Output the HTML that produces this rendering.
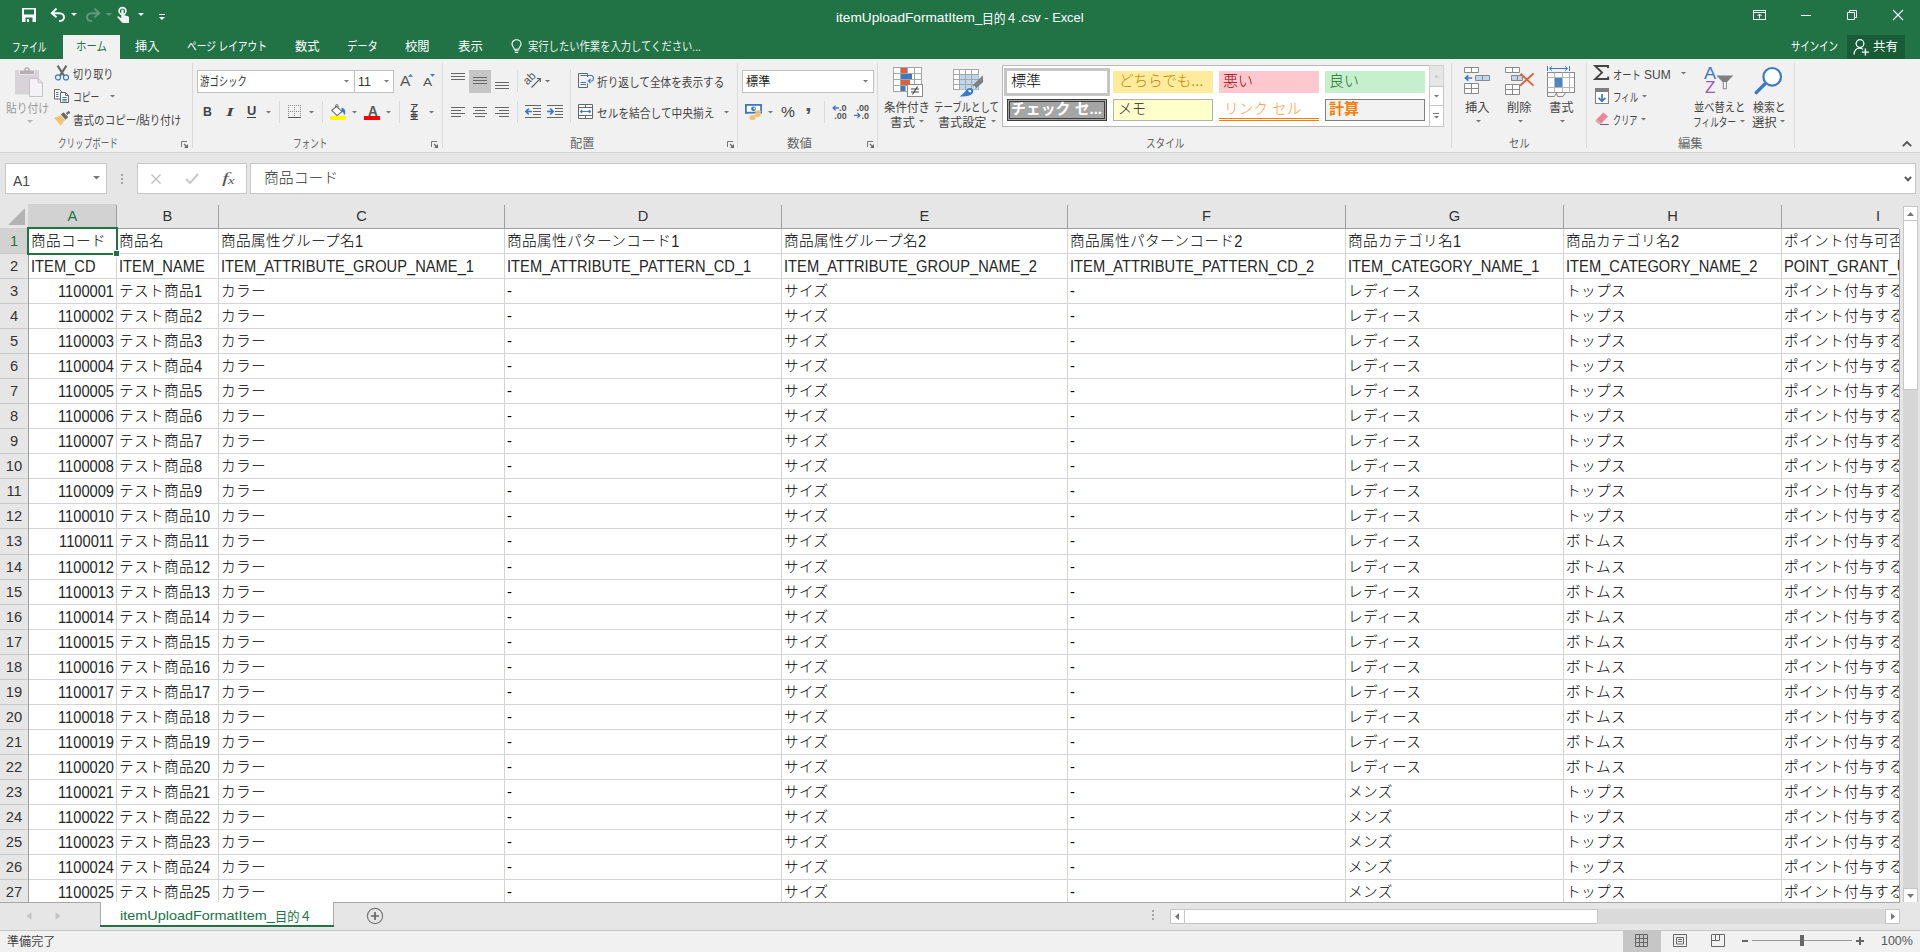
<!DOCTYPE html>
<html lang="ja"><head><meta charset="utf-8"><title>itemUploadFormatItem_目的４.csv - Excel</title>
<style>
html,body{margin:0;padding:0;}
body{width:1920px;height:952px;overflow:hidden;background:#e6e6e6;font-family:"Liberation Sans","Noto Sans CJK JP",sans-serif;color:#444;}
#app{position:relative;width:1920px;height:952px;overflow:hidden;}
.abs{position:absolute;}
.t{position:absolute;white-space:nowrap;line-height:1;transform-origin:0 50%;}
svg{position:absolute;overflow:visible;}
.c{position:absolute;height:24px;line-height:24px;font-size:14.67px;color:#000;font-weight:300;letter-spacing:0.33px;white-space:nowrap;overflow:hidden;box-sizing:border-box;padding-left:2px;}
.c.n{text-align:right;padding-right:2px;padding-left:0;}
.ch .L,.rh .L{color:inherit;transform:scaleY(1.05);}
.ch{top:204px;height:24px;line-height:24px;font-size:14.67px;text-align:center;}
.rh{left:0;width:28px;height:24px;line-height:24px;font-size:14.67px;text-align:center;}
.L{letter-spacing:0;color:#262626;display:inline-block;transform:translateY(0.8px) scaleY(1.09);transform-origin:0 17.1px;}
.c.l .L{letter-spacing:0.03px;}

</style></head><body>
<div id="app">
<!-- titlebar -->
<div class="abs" style="left:0px;top:0px;width:1920px;height:59px;background:#217346;"></div>
<svg style="left:22px;top:8px" width="14" height="14" viewBox="0 0 14 14"><path d="M0 0H14V14H0Z M2 1.5V6.5H12V1.5Z M3.5 9.5V14H10.5V9.5Z" fill="#fff" fill-rule="evenodd"/><rect x="5" y="11" width="2" height="3" fill="#fff"/></svg>
<svg style="left:50px;top:7px" width="16" height="16" viewBox="0 0 16 16"><path d="M6.5 1.5L1.8 6.2L6.5 10.2 M2 6.2H9.5C12.5 6.2 14 8.2 14 10.2C14 12.6 12 14 9 14" fill="none" stroke="#fff" stroke-width="1.9" stroke-linecap="butt"/></svg>
<svg style="left:70.5px;top:13px" width="6" height="3" viewBox="0 0 6 3"><path d="M0 0H6L3 3Z" fill="#fff"/></svg>
<svg style="left:85px;top:7px" width="16" height="16" viewBox="0 0 16 16"><path d="M9.5 1.5L14.2 6.2L9.5 10.2 M14 6.2H6.5C3.5 6.2 2 8.2 2 10.2C2 12.6 4 14 7 14" fill="none" stroke="#5d9c7a" stroke-width="1.9"/></svg>
<svg style="left:105.5px;top:13px" width="6" height="3" viewBox="0 0 6 3"><path d="M0 0H6L3 3Z" fill="#5d9c7a"/></svg>
<svg style="left:116px;top:6px" width="15" height="18" viewBox="0 0 15 18"><circle cx="6.5" cy="5" r="3.4" fill="none" stroke="#fff" stroke-width="1.6"/><path d="M5.3 4.2C5.3 3.3 7.7 3.3 7.7 4.2V9L11.5 10C12.6 10.3 13 11 13 12V17H6.5L1.5 11.5C1 10.7 2 10 2.8 10.5L5.3 12.3Z" fill="#f0f0f0"/></svg>
<svg style="left:137.5px;top:13px" width="6" height="3" viewBox="0 0 6 3"><path d="M0 0H6L3 3Z" fill="#fff"/></svg>
<div class="abs" style="left:159px;top:14px;width:6px;height:1px;background:#fff;"></div>
<svg style="left:159px;top:17px" width="6" height="3" viewBox="0 0 6 3"><path d="M0 0H6L3 3Z" fill="#fff"/></svg>
<span class="t" style="left:835.5px;top:7.95833px;height:20px;line-height:20px;font-size:13.4px;color:#fff;transform:scaleX(1.0192);">itemUploadFormatItem_</span>
<span class="t" style="left:981.5px;top:8.94167px;height:20px;line-height:20px;font-size:13px;color:#fff;transform:scaleX(0.9073);">目的４</span>
<span class="t" style="left:1018.1px;top:7.95833px;height:20px;line-height:20px;font-size:13.4px;color:#fff;transform:scaleX(0.9569);">.csv - Excel</span>
<svg style="left:1753px;top:10px" width="13" height="10" viewBox="0 0 13 10"><rect x="0.5" y="0.5" width="12" height="9" fill="none" stroke="#fff"/><path d="M0 2.5H13 M6.5 4V8.5 M4.5 6L6.5 4L8.5 6" fill="none" stroke="#fff"/></svg>
<div class="abs" style="left:1801px;top:15px;width:10px;height:1px;background:#fff;"></div>
<svg style="left:1847px;top:10px" width="10" height="10" viewBox="0 0 10 10"><path d="M0.5 2.5H7.5V9.5H0.5Z M2.5 2.5V0.5H9.5V7.5H7.5" fill="none" stroke="#fff"/></svg>
<svg style="left:1893px;top:10px" width="10" height="10" viewBox="0 0 10 10"><path d="M0 0L10 10M10 0L0 10" stroke="#fff" stroke-width="1.1"/></svg>
<div class="abs" style="left:63px;top:35px;width:57px;height:24px;background:#f1f1f1;"></div>
<span class="t" style="left:11.5px;top:39.3208px;height:19px;line-height:19px;font-size:12.5px;color:#fff;transform:scaleX(0.6878);">ファイル</span>
<span class="t" style="left:75.5px;top:38.3208px;height:19px;line-height:19px;font-size:12.5px;color:#217346;transform:scaleX(0.8320);">ホーム</span>
<span class="t" style="left:134.5px;top:38.3208px;height:19px;line-height:19px;font-size:12.5px;color:#fff;transform:scaleX(0.9754);">挿入</span>
<span class="t" style="left:186.5px;top:38.3208px;height:19px;line-height:19px;font-size:12.5px;color:#fff;transform:scaleX(0.7740);">ページ レイアウト</span>
<span class="t" style="left:294.5px;top:38.3208px;height:19px;line-height:19px;font-size:12.5px;color:#fff;transform:scaleX(0.9754);">数式</span>
<span class="t" style="left:346.5px;top:38.3208px;height:19px;line-height:19px;font-size:12.5px;color:#fff;transform:scaleX(0.8237);">データ</span>
<span class="t" style="left:404.5px;top:38.3208px;height:19px;line-height:19px;font-size:12.5px;color:#fff;transform:scaleX(0.9754);">校閲</span>
<span class="t" style="left:457.5px;top:38.3208px;height:19px;line-height:19px;font-size:12.5px;color:#fff;transform:scaleX(0.9954);">表示</span>
<svg style="left:511px;top:39px" width="11" height="15" viewBox="0 0 11 15"><path d="M3.3 10.2C3.3 8.6 1 7.6 1 5C1 2.6 3 0.8 5.5 0.8C8 0.8 10 2.6 10 5C10 7.6 7.7 8.6 7.7 10.2Z" fill="none" stroke="#fff" stroke-width="1.1"/><path d="M3.5 11.8H7.5 M3.8 13.5H7.2" stroke="#fff" stroke-width="1.1"/></svg>
<span class="t" style="left:527.5px;top:38.3208px;height:19px;line-height:19px;font-size:12.5px;color:#e9f2ec;transform:scaleX(0.8246);">実行したい作業を入力してください...</span>
<span class="t" style="left:1790.5px;top:38.3208px;height:19px;line-height:19px;font-size:12.5px;color:#fff;transform:scaleX(0.7502);">サインイン</span>
<div class="abs" style="left:1847px;top:35px;width:58px;height:24px;background:#185c37;"></div>
<svg style="left:1853px;top:39px" width="17" height="17" viewBox="0 0 17 17"><circle cx="7" cy="4.6" r="3.9" fill="none" stroke="#fff" stroke-width="1.2"/><path d="M1 15.5C1 11.5 3.5 9.2 6.5 9.2C7.8 9.2 9 9.6 10 10.4" fill="none" stroke="#fff" stroke-width="1.2"/><path d="M12.4 9.6V16.6M8.9 13.1H15.9" stroke="#fff" stroke-width="1.35"/></svg>
<span class="t" style="left:1872.5px;top:38.3208px;height:19px;line-height:19px;font-size:12.5px;color:#fff;transform:scaleX(0.9954);">共有</span>
<!-- ribbon -->
<div class="abs" style="left:0px;top:59px;width:1920px;height:93px;background:#f1f1f1;"></div>
<div class="abs" style="left:0px;top:152px;width:1920px;height:1px;background:#d4d4d4;"></div>
<div class="abs" style="left:192px;top:63px;width:1px;height:85px;background:#dadada;"></div>
<div class="abs" style="left:442px;top:63px;width:1px;height:85px;background:#dadada;"></div>
<div class="abs" style="left:737px;top:63px;width:1px;height:85px;background:#dadada;"></div>
<div class="abs" style="left:877px;top:63px;width:1px;height:85px;background:#dadada;"></div>
<div class="abs" style="left:1451px;top:63px;width:1px;height:85px;background:#dadada;"></div>
<div class="abs" style="left:1586px;top:63px;width:1px;height:85px;background:#dadada;"></div>
<div class="abs" style="left:1794px;top:63px;width:1px;height:85px;background:#dadada;"></div>
<svg style="left:15px;top:67px" width="28" height="30" viewBox="0 0 28 30"><rect x="0" y="3" width="24" height="24.6" rx="1.3" fill="#d7d3d7"/><path d="M4.4 7.6V3.6C4.4 3 4.8 2.8 5.4 2.8H8.8V1.6C8.8 -0.6 15.2 -0.6 15.2 1.6V2.8H18.6C19.2 2.8 19.6 3 19.6 3.6V7.6Z" fill="#f1f1f1"/><path d="M5 7V4C5 3.6 5.2 3.4 5.6 3.4H9.4V1.8C9.4 -0.2 14.6 -0.2 14.6 1.8V3.4H18.4C18.8 3.4 19 3.6 19 4V7Z" fill="#b3b0b3"/><circle cx="12" cy="2.6" r="1.1" fill="#f1f1f1"/><path d="M14.5 11.5H23.2L27.5 15.8V29.5H14.5Z" fill="#f5f1f7" stroke="#c4c1c5"/><path d="M23.2 11.5V15.8H27.5" fill="none" stroke="#c4c1c5"/></svg>
<span class="t" style="left:5.5px;top:99.6px;height:18px;line-height:18px;font-size:12px;color:#9a9a9a;transform:scaleX(0.8935);">貼り付け</span>
<svg style="left:26.5px;top:119.9px" width="6" height="3" viewBox="0 0 6 3"><path d="M0 0H6L3 3Z" fill="#b8b8b8"/></svg>
<svg style="left:54px;top:65px" width="16" height="16" viewBox="0 0 16 16"><path d="M3.6 0.6L10.2 11 M12.4 0.6L5.8 11" stroke="#666" stroke-width="2.1" fill="none"/><circle cx="4" cy="12.4" r="2.5" fill="none" stroke="#3b79c3" stroke-width="1.2"/><circle cx="12" cy="12.4" r="2.5" fill="none" stroke="#3b79c3" stroke-width="1.2"/></svg>
<span class="t" style="left:73px;top:65.9px;height:18px;line-height:18px;font-size:12px;color:#444;transform:scaleX(0.8414);">切り取り</span>
<svg style="left:53px;top:88px" width="17" height="16" viewBox="0 0 17 16"><path d="M1.5 1.5H6.5L9 4V11H1.5Z" fill="#fff" stroke="#666"/><path d="M3 4.5H5.5M3 6.5H5.5M3 8.5H5.5" stroke="#3b79c3"/><path d="M7.5 4.5H12.5L15.5 7.5V14.5H7.5Z" fill="#fff" stroke="#666"/><path d="M12.5 4.5V7.5H15.5" fill="none" stroke="#666"/><path d="M9.3 9.5H13.7M9.3 11.5H13.7M9.3 12.9H13.7" stroke="#3b79c3"/></svg>
<span class="t" style="left:73px;top:88.7px;height:18px;line-height:18px;font-size:12px;color:#444;transform:scaleX(0.7330);">コピー</span>
<svg style="left:110.2px;top:95.35px" width="5" height="2.5" viewBox="0 0 5 2.5"><path d="M0 0H5L2.5 2.5Z" fill="#777"/></svg>
<svg style="left:54px;top:111px" width="17" height="16" viewBox="0 0 17 16"><path d="M0.2 6.8L6.6 4.6L11 9L6.6 14.8Z" fill="#f0c275"/><path d="M6.8 3.6L9.6 1.2L14.2 6L11.6 8.8Z" fill="#6a6a6a"/><path d="M12.6 3L15.6 0.8" stroke="#6a6a6a" stroke-width="2.4"/></svg>
<span class="t" style="left:73px;top:111.9px;height:18px;line-height:18px;font-size:12px;color:#444;transform:scaleX(0.8788);">書式のコピー/貼り付け</span>
<span class="t" style="left:58px;top:134.8px;height:18px;line-height:18px;font-size:12px;color:#666;transform:scaleX(0.7130);">クリップボード</span>
<svg style="left:181px;top:141px" width="7" height="7" viewBox="0 0 7 7"><path d="M0.5 6V0.5H6" fill="none" stroke="#777"/><path d="M7 3V7H3Z" fill="#666"/><path d="M3 3L5.5 5.5" stroke="#666" stroke-width="1.1"/></svg>
<div class="abs" style="left:197px;top:70px;width:158px;height:23px;background:#fff;border:1px solid #c0c0c0;box-sizing:border-box;"></div>
<div class="abs" style="left:354px;top:70px;width:40px;height:23px;background:#fff;border:1px solid #c0c0c0;box-sizing:border-box;"></div>
<span class="t" style="left:199.5px;top:73.1px;height:18px;line-height:18px;font-size:12px;color:#333;transform:scaleX(0.7815);">游ゴシック</span>
<svg style="left:344px;top:80.35px" width="5" height="2.5" viewBox="0 0 5 2.5"><path d="M0 0H5L2.5 2.5Z" fill="#777"/></svg>
<span class="t" style="left:357.5px;top:72.6208px;height:19px;line-height:19px;font-size:12.5px;color:#333;transform:scaleX(0.9935);">11</span>
<svg style="left:384px;top:80.35px" width="5" height="2.5" viewBox="0 0 5 2.5"><path d="M0 0H5L2.5 2.5Z" fill="#777"/></svg>
<span class="t" style="left:400px;top:71.2833px;height:21px;line-height:21px;font-size:14px;color:#555;transform:scaleX(1.1130);">A</span>
<svg style="left:407.8px;top:74px" width="5" height="2.7" viewBox="0 0 5 2.7"><path d="M0 2.7H5L2.5 0Z" fill="#3b79c3"/></svg>
<span class="t" style="left:422.8px;top:74.3792px;height:17px;line-height:17px;font-size:11.5px;color:#555;transform:scaleX(1.1862);">A</span>
<svg style="left:430.2px;top:74px" width="5" height="2.7" viewBox="0 0 5 2.7"><path d="M0 0H5L2.5 2.7Z" fill="#3b79c3"/></svg>
<span class="t" style="left:203px;top:102.142px;height:20px;line-height:20px;font-size:13px;color:#444;font-weight:bold;transform:scaleX(0.9478);">B</span>
<span class="t" style="left:225.5px;top:102.162px;height:20px;line-height:20px;font-size:13.5px;color:#444;font-weight:bold;font-style:italic;font-family:'Liberation Serif',serif;transform:scaleX(1.5003);">I</span>
<span class="t" style="left:246.8px;top:102.221px;height:19px;line-height:19px;font-size:12.5px;color:#444;font-weight:bold;transform:scaleX(1.0298);">U</span>
<div class="abs" style="left:247px;top:117px;width:9px;height:1px;background:#444;"></div>
<svg style="left:266px;top:111.05px" width="5" height="2.5" viewBox="0 0 5 2.5"><path d="M0 0H5L2.5 2.5Z" fill="#777"/></svg>
<div class="abs" style="left:279px;top:101px;width:1px;height:22px;background:#dadada;"></div>
<svg style="left:288px;top:105px" width="13" height="13" viewBox="0 0 13 13"><g fill="#8a8a8a" shape-rendering="crispEdges"><rect x="0" y="0" width="1" height="1"/><rect x="2" y="0" width="1" height="1"/><rect x="4" y="0" width="1" height="1"/><rect x="6" y="0" width="1" height="1"/><rect x="8" y="0" width="1" height="1"/><rect x="10" y="0" width="1" height="1"/><rect x="12" y="0" width="1" height="1"/><rect x="0" y="6" width="1" height="1"/><rect x="2" y="6" width="1" height="1"/><rect x="4" y="6" width="1" height="1"/><rect x="6" y="6" width="1" height="1"/><rect x="8" y="6" width="1" height="1"/><rect x="10" y="6" width="1" height="1"/><rect x="12" y="6" width="1" height="1"/><rect x="0" y="2" width="1" height="1"/><rect x="0" y="4" width="1" height="1"/><rect x="0" y="6" width="1" height="1"/><rect x="0" y="8" width="1" height="1"/><rect x="0" y="10" width="1" height="1"/><rect x="6" y="2" width="1" height="1"/><rect x="6" y="4" width="1" height="1"/><rect x="6" y="6" width="1" height="1"/><rect x="6" y="8" width="1" height="1"/><rect x="6" y="10" width="1" height="1"/><rect x="12" y="2" width="1" height="1"/><rect x="12" y="4" width="1" height="1"/><rect x="12" y="6" width="1" height="1"/><rect x="12" y="8" width="1" height="1"/><rect x="12" y="10" width="1" height="1"/></g><rect x="0" y="12" width="13" height="1" fill="#555" shape-rendering="crispEdges"/></svg>
<svg style="left:309.1px;top:111.05px" width="5" height="2.5" viewBox="0 0 5 2.5"><path d="M0 0H5L2.5 2.5Z" fill="#777"/></svg>
<div class="abs" style="left:322px;top:101px;width:1px;height:22px;background:#dadada;"></div>
<svg style="left:330px;top:104px" width="16" height="12" viewBox="0 0 16 12"><path d="M6.4 2.4L12 7.4L7 11.6L1.8 6.4Z" fill="#fff" stroke="#666" stroke-width="1.1"/><path d="M5.6 4V1.6C5.6 0.2 8 0.2 8 1.6V3.8" fill="none" stroke="#666"/><path d="M11.6 3.6C15.4 4.6 16.4 8.4 14 11.4C14 9.2 13.2 7.8 11.6 7.4Z" fill="#3b79c3"/></svg>
<div class="abs" style="left:330px;top:116px;width:16px;height:4px;background:#ffff00;"></div>
<svg style="left:352px;top:111.05px" width="5" height="2.5" viewBox="0 0 5 2.5"><path d="M0 0H5L2.5 2.5Z" fill="#777"/></svg>
<span class="t" style="left:367.5px;top:100.783px;height:21px;line-height:21px;font-size:14px;color:#5a5a5a;font-weight:bold;transform:scaleX(0.9679);">A</span>
<div class="abs" style="left:364px;top:116px;width:16px;height:4px;background:#ff0000;"></div>
<svg style="left:386.1px;top:111.05px" width="5" height="2.5" viewBox="0 0 5 2.5"><path d="M0 0H5L2.5 2.5Z" fill="#777"/></svg>
<div class="abs" style="left:399px;top:101px;width:1px;height:22px;background:#dadada;"></div>
<span class="t" style="left:410.3px;top:102.013px;height:11px;line-height:11px;font-size:7.5px;color:#444;font-weight:bold;transform:scaleX(1.0800);">ア</span>
<span class="t" style="left:410.3px;top:108.996px;height:14px;line-height:14px;font-size:9.5px;color:#444;font-weight:bold;transform:scaleX(0.8722);">亜</span>
<svg style="left:429px;top:111.05px" width="5" height="2.5" viewBox="0 0 5 2.5"><path d="M0 0H5L2.5 2.5Z" fill="#777"/></svg>
<span class="t" style="left:292.8px;top:134.8px;height:18px;line-height:18px;font-size:12px;color:#666;transform:scaleX(0.7144);">フォント</span>
<svg style="left:431px;top:141px" width="7" height="7" viewBox="0 0 7 7"><path d="M0.5 6V0.5H6" fill="none" stroke="#777"/><path d="M7 3V7H3Z" fill="#666"/><path d="M3 3L5.5 5.5" stroke="#666" stroke-width="1.1"/></svg>
<div class="abs" style="left:451px;top:73px;width:14px;height:1px;background:#666;"></div><div class="abs" style="left:451px;top:76px;width:14px;height:1px;background:#666;"></div><div class="abs" style="left:451px;top:79px;width:14px;height:1px;background:#666;"></div>
<div class="abs" style="left:469px;top:70px;width:22px;height:23px;background:#c6c6c6;"></div>
<div class="abs" style="left:473px;top:77px;width:14px;height:1px;background:#666;"></div><div class="abs" style="left:473px;top:80px;width:14px;height:1px;background:#666;"></div><div class="abs" style="left:473px;top:83px;width:14px;height:1px;background:#666;"></div>
<div class="abs" style="left:495px;top:82px;width:14px;height:1px;background:#666;"></div><div class="abs" style="left:495px;top:85px;width:14px;height:1px;background:#666;"></div><div class="abs" style="left:495px;top:88px;width:14px;height:1px;background:#666;"></div>
<div class="abs" style="left:517px;top:70px;width:1px;height:22px;background:#dadada;"></div>
<svg style="left:525px;top:72px" width="17" height="17" viewBox="0 0 17 17"><text x="0" y="0" transform="translate(2.6,13.6) rotate(-45)" font-size="11.5" font-family="Liberation Sans,sans-serif" fill="#555">ab</text><path d="M6.5 15.5L15 6.8M11.8 6.5H15.3V10" fill="none" stroke="#555" stroke-width="1.1"/></svg>
<svg style="left:545.1px;top:80.15px" width="5" height="2.5" viewBox="0 0 5 2.5"><path d="M0 0H5L2.5 2.5Z" fill="#777"/></svg>
<div class="abs" style="left:570px;top:69px;width:1px;height:54px;background:#dadada;"></div>
<svg style="left:578px;top:73px" width="17" height="15" viewBox="0 0 17 15"><path d="M0.5 0.5H9.5V4M0.5 0.5V14.5H9.5V10.5" fill="none" stroke="#666"/><path d="M2.5 2.5H13.5" stroke="#3b79c3"/><path d="M2.5 9.5H8M2.5 11.5H8" stroke="#3b79c3"/><path d="M9.5 2.5H13.5C16 2.5 16 8 13.5 8H10.5M12.5 5.8L10.3 8L12.5 10.2" fill="none" stroke="#3b79c3" stroke-width="1.1"/></svg>
<span class="t" style="left:596.5px;top:73.5px;height:18px;line-height:18px;font-size:12px;color:#444;transform:scaleX(0.8868);">折り返して全体を表示する</span>
<div class="abs" style="left:451px;top:107px;width:14px;height:1px;background:#666;"></div><div class="abs" style="left:451px;top:110px;width:10px;height:1px;background:#666;"></div><div class="abs" style="left:451px;top:113px;width:14px;height:1px;background:#666;"></div><div class="abs" style="left:451px;top:116px;width:10px;height:1px;background:#666;"></div>
<div class="abs" style="left:473px;top:107px;width:14px;height:1px;background:#666;"></div><div class="abs" style="left:475px;top:110px;width:10px;height:1px;background:#666;"></div><div class="abs" style="left:473px;top:113px;width:14px;height:1px;background:#666;"></div><div class="abs" style="left:475px;top:116px;width:10px;height:1px;background:#666;"></div>
<div class="abs" style="left:495px;top:107px;width:14px;height:1px;background:#666;"></div><div class="abs" style="left:499px;top:110px;width:10px;height:1px;background:#666;"></div><div class="abs" style="left:495px;top:113px;width:14px;height:1px;background:#666;"></div><div class="abs" style="left:499px;top:116px;width:10px;height:1px;background:#666;"></div>
<div class="abs" style="left:517px;top:101px;width:1px;height:22px;background:#dadada;"></div>
<div class="abs" style="left:525px;top:105px;width:16px;height:1px;background:#666;"></div>
<div class="abs" style="left:525px;top:117px;width:16px;height:1px;background:#666;"></div>
<div class="abs" style="left:533px;top:108px;width:8px;height:1px;background:#666;"></div><div class="abs" style="left:533px;top:111px;width:8px;height:1px;background:#666;"></div><div class="abs" style="left:533px;top:114px;width:8px;height:1px;background:#666;"></div>
<svg style="left:525px;top:107.5px" width="7" height="7" viewBox="0 0 7 7"><path d="M7 3.5H1.2M3.8 0.6L0.9 3.5L3.8 6.4" fill="none" stroke="#3b79c3" stroke-width="1.7"/></svg>
<div class="abs" style="left:547px;top:105px;width:16px;height:1px;background:#666;"></div>
<div class="abs" style="left:547px;top:117px;width:16px;height:1px;background:#666;"></div>
<div class="abs" style="left:555px;top:108px;width:8px;height:1px;background:#666;"></div><div class="abs" style="left:555px;top:111px;width:8px;height:1px;background:#666;"></div><div class="abs" style="left:555px;top:114px;width:8px;height:1px;background:#666;"></div>
<svg style="left:547px;top:107.5px" width="7" height="7" viewBox="0 0 7 7"><path d="M0 3.5H5.8M3.2 0.6L6.1 3.5L3.2 6.4" fill="none" stroke="#3b79c3" stroke-width="1.7"/></svg>
<svg style="left:578px;top:104px" width="16" height="15" viewBox="0 0 16 15"><path d="M0.5 0.5H14.5V14.5H0.5Z M0.5 3.5H14.5 M0.5 11.5H14.5 M7.5 0.5V3.5 M7.5 11.5V14.5" fill="#fff" stroke="#666"/><path d="M2.5 7.5H12.5M4.2 5.8L2.5 7.5L4.2 9.2M10.8 5.8L12.5 7.5L10.8 9.2" fill="none" stroke="#3b79c3" stroke-width="1.1"/></svg>
<span class="t" style="left:596.5px;top:104.5px;height:18px;line-height:18px;font-size:12px;color:#444;transform:scaleX(0.8917);">セルを結合して中央揃え</span>
<svg style="left:723.5px;top:111.05px" width="5" height="2.5" viewBox="0 0 5 2.5"><path d="M0 0H5L2.5 2.5Z" fill="#777"/></svg>
<span class="t" style="left:570px;top:134.8px;height:18px;line-height:18px;font-size:12px;color:#666;transform:scaleX(1.0160);">配置</span>
<svg style="left:726.5px;top:141px" width="7" height="7" viewBox="0 0 7 7"><path d="M0.5 6V0.5H6" fill="none" stroke="#777"/><path d="M7 3V7H3Z" fill="#666"/><path d="M3 3L5.5 5.5" stroke="#666" stroke-width="1.1"/></svg>
<div class="abs" style="left:742px;top:70px;width:132px;height:23px;background:#fff;border:1px solid #c0c0c0;box-sizing:border-box;"></div>
<span class="t" style="left:745.5px;top:72.9px;height:18px;line-height:18px;font-size:12px;color:#222;transform:scaleX(1.0160);">標準</span>
<svg style="left:863.3px;top:80.35px" width="5" height="2.5" viewBox="0 0 5 2.5"><path d="M0 0H5L2.5 2.5Z" fill="#777"/></svg>
<svg style="left:745px;top:104px" width="17" height="16" viewBox="0 0 17 16"><rect x="0.9" y="0.9" width="15.2" height="7.8" fill="#fff" stroke="#3b79c3" stroke-width="1.8"/><circle cx="8.5" cy="4.8" r="2.4" fill="#3b79c3"/><circle cx="9.3" cy="4.4" r="0.9" fill="#fff"/><path d="M0 0H3.5L0 3.5Z M17 0H13.5L17 3.5Z M0 9.6H3.5L0 6.1Z" fill="#3b79c3"/><ellipse cx="13" cy="7.6" rx="3.2" ry="1.3" fill="#f0c275"/><ellipse cx="13" cy="9.6" rx="3.2" ry="1.3" fill="#f0c275"/><ellipse cx="12.6" cy="11.6" rx="3.2" ry="1.3" fill="#f0c275"/><ellipse cx="7.6" cy="12.6" rx="3.2" ry="1.3" fill="#f0c275"/><ellipse cx="7.6" cy="14.6" rx="3.2" ry="1.3" fill="#f0c275"/></svg>
<svg style="left:767.5px;top:111.05px" width="5" height="2.5" viewBox="0 0 5 2.5"><path d="M0 0H5L2.5 2.5Z" fill="#777"/></svg>
<span class="t" style="left:781px;top:99.5458px;height:23px;line-height:23px;font-size:15.5px;color:#444;transform:scaleX(1.0075);">%</span>
<span class="t" style="left:805.3px;top:88.475px;height:32px;line-height:32px;font-size:21px;color:#555;font-weight:bold;transform:scaleX(1.1465);">,</span>
<div class="abs" style="left:824px;top:101px;width:1px;height:22px;background:#dadada;"></div>
<svg style="left:832px;top:105px" width="15" height="14" viewBox="0 0 15 14"><path d="M7 3H1.3M3.6 0.6L1.1 3L3.6 5.4" fill="none" stroke="#3b79c3" stroke-width="1.3"/><text x="7" y="6.3" textLength="7.6" lengthAdjust="spacingAndGlyphs" font-size="8.2" font-weight="bold" font-family="Liberation Sans,sans-serif" fill="#555">.0</text><text x="2.2" y="13.6" font-size="8.2" font-weight="bold" font-family="Liberation Sans,sans-serif" fill="#555" textLength="12.5" lengthAdjust="spacingAndGlyphs">.00</text></svg>
<svg style="left:854px;top:105px" width="15" height="14" viewBox="0 0 15 14"><text x="2.6" y="6.3" font-size="8.2" font-weight="bold" font-family="Liberation Sans,sans-serif" fill="#555" textLength="12.5" lengthAdjust="spacingAndGlyphs">.00</text><path d="M0 10.4H5.7M3.4 8L5.9 10.4L3.4 12.8" fill="none" stroke="#3b79c3" stroke-width="1.3"/><text x="7.4" y="13.6" textLength="7.6" lengthAdjust="spacingAndGlyphs" font-size="8.2" font-weight="bold" font-family="Liberation Sans,sans-serif" fill="#555">.0</text></svg>
<span class="t" style="left:786.8px;top:134.8px;height:18px;line-height:18px;font-size:12px;color:#666;transform:scaleX(1.0452);">数値</span>
<svg style="left:866.5px;top:141px" width="7" height="7" viewBox="0 0 7 7"><path d="M0.5 6V0.5H6" fill="none" stroke="#777"/><path d="M7 3V7H3Z" fill="#666"/><path d="M3 3L5.5 5.5" stroke="#666" stroke-width="1.1"/></svg>
<svg style="left:893px;top:67px" width="30" height="30" viewBox="0 0 30 30"><rect x="0.5" y="0.5" width="28" height="24" fill="#fff" stroke="#a6a6a6"/><path d="M7.5 0.5V24.5" stroke="#a6a6a6"/><path d="M14.5 0.5V24.5" stroke="#a6a6a6"/><path d="M21.5 0.5V24.5" stroke="#a6a6a6"/><path d="M0.5 6.5H28.5" stroke="#a6a6a6"/><path d="M0.5 12.5H28.5" stroke="#a6a6a6"/><path d="M0.5 18.5H28.5" stroke="#a6a6a6"/><rect x="8" y="1" width="6" height="5" fill="#e05e3a"/><rect x="8" y="7" width="11" height="5" fill="#3b79c3"/><rect x="8" y="13" width="9" height="5" fill="#e05e3a"/><rect x="8" y="19" width="4.5" height="5" fill="#3b79c3"/><rect x="14.5" y="17.5" width="15" height="12" fill="#fff" stroke="#8a8a8a"/><path d="M18 22H26M18 25H26M24.5 19.5L19.5 27.5" stroke="#444" stroke-width="1.1" fill="none"/></svg>
<span class="t" style="left:884px;top:98.8px;height:18px;line-height:18px;font-size:12px;color:#444;transform:scaleX(0.9559);">条件付き</span>
<span class="t" style="left:890px;top:113.8px;height:18px;line-height:18px;font-size:12px;color:#444;transform:scaleX(1.0368);">書式</span>
<svg style="left:918.5px;top:120.25px" width="5" height="2.5" viewBox="0 0 5 2.5"><path d="M0 0H5L2.5 2.5Z" fill="#777"/></svg>
<svg style="left:953px;top:69px" width="31" height="28" viewBox="0 0 31 28"><rect x="0.5" y="0.5" width="25" height="20" fill="#fff" stroke="#a6a6a6"/><rect x="7" y="5.5" width="18.5" height="15" fill="#bdd7ee"/><path d="M6.5 0.5V20.5" stroke="#a6a6a6"/><path d="M12.5 0.5V20.5" stroke="#a6a6a6"/><path d="M18.5 0.5V20.5" stroke="#a6a6a6"/><path d="M0.5 5.5H25.5" stroke="#a6a6a6"/><path d="M0.5 10.5H25.5" stroke="#a6a6a6"/><path d="M0.5 15.5H25.5" stroke="#a6a6a6"/><path d="M29.8 6.2L30.2 13L22.8 19.8L19.6 16.6Z" fill="#7f7f7f"/><path d="M21 17.5L22.3 18.8" stroke="#f1f1f1" stroke-width="1.2"/><path d="M6.5 27.5C11 25 13 21 14.5 19.8C17 18 20.5 19.3 20.3 22.3C20 26.5 15 27.5 6.5 27.5Z" fill="#3b79c3"/><ellipse cx="16.8" cy="22" rx="1.6" ry="1.1" fill="#fff" transform="rotate(35 16.8 22)"/></svg>
<span class="t" style="left:934px;top:98.8px;height:18px;line-height:18px;font-size:12px;color:#444;transform:scaleX(0.7827);">テーブルとして</span>
<span class="t" style="left:938px;top:113.8px;height:18px;line-height:18px;font-size:12px;color:#444;transform:scaleX(1.0080);">書式設定</span>
<svg style="left:990.8px;top:120.25px" width="5" height="2.5" viewBox="0 0 5 2.5"><path d="M0 0H5L2.5 2.5Z" fill="#777"/></svg>
<div class="abs" style="left:1002px;top:65px;width:442px;height:62px;background:#fff;border:1px solid #b8b8b8;box-sizing:border-box;"></div>
<div class="abs" style="left:1004px;top:68px;width:106px;height:28px;background:#fff;border:3px solid #c6c6c6;box-sizing:border-box;"></div>
<span class="t" style="left:1010.5px;top:69.9112px;height:22px;line-height:22px;font-size:14.67px;color:#000;font-weight:300;transform:scaleX(1.0297);">標準</span>
<div class="abs" style="left:1113px;top:71px;width:100px;height:22px;background:#ffeb9c;"></div>
<span class="t" style="left:1118.5px;top:70.2112px;height:22px;line-height:22px;font-size:14.67px;color:#b8860b;font-weight:300;transform:scaleX(0.9922);">どちらでも...</span>
<div class="abs" style="left:1219px;top:71px;width:100px;height:22px;background:#ffc7ce;"></div>
<span class="t" style="left:1223px;top:70.2112px;height:22px;line-height:22px;font-size:14.67px;color:#9c0006;font-weight:300;transform:scaleX(1.0195);">悪い</span>
<div class="abs" style="left:1325px;top:71px;width:100px;height:22px;background:#c6efce;"></div>
<span class="t" style="left:1329px;top:70.2112px;height:22px;line-height:22px;font-size:14.67px;color:#1e6b1e;font-weight:300;transform:scaleX(1.0195);">良い</span>
<div class="abs" style="left:1007px;top:99px;width:100px;height:22px;background:#a5a5a5;border:1px solid #3f3f3f;box-sizing:border-box;"></div>
<div class="abs" style="left:1009px;top:101px;width:96px;height:18px;border:1px solid #3f3f3f;box-sizing:border-box;"></div>
<span class="t" style="left:1011px;top:98.2112px;height:22px;line-height:22px;font-size:14.67px;color:#fff;font-weight:bold;transform:scaleX(1.0148);">チェック セ...</span>
<div class="abs" style="left:1113px;top:99px;width:100px;height:22px;background:#ffffcc;border:1px solid #b2b2b2;box-sizing:border-box;"></div>
<span class="t" style="left:1118px;top:98.2112px;height:22px;line-height:22px;font-size:14.67px;color:#222;font-weight:300;transform:scaleX(0.9513);">メモ</span>
<span class="t" style="left:1224px;top:98.0113px;height:22px;line-height:22px;font-size:14.67px;color:#fa9a3c;font-weight:300;">リンク セル</span>
<div class="abs" style="left:1219px;top:118px;width:100px;height:1px;background:#fa7d00;"></div>
<div class="abs" style="left:1219px;top:120px;width:100px;height:1px;background:#fa7d00;"></div>
<div class="abs" style="left:1325px;top:99px;width:100px;height:22px;background:#f2f2f2;border:1px solid #7f7f7f;box-sizing:border-box;"></div>
<span class="t" style="left:1329px;top:98.0113px;height:22px;line-height:22px;font-size:14.67px;color:#fa7d00;font-weight:bold;transform:scaleX(1.0195);">計算</span>
<div class="abs" style="left:1429px;top:65px;width:15px;height:22px;background:#e6e6e6;border:1px solid #d0d0d0;box-sizing:border-box;"></div>
<svg style="left:1433.5px;top:74.5px" width="5" height="2.5" viewBox="0 0 5 2.5"><path d="M0 2.5H5L2.5 0Z" fill="#c6c6c6"/></svg>
<div class="abs" style="left:1429px;top:86px;width:15px;height:20px;background:#fff;border:1px solid #c6c6c6;box-sizing:border-box;"></div>
<svg style="left:1433.5px;top:95.05px" width="5" height="2.5" viewBox="0 0 5 2.5"><path d="M0 0H5L2.5 2.5Z" fill="#777"/></svg>
<div class="abs" style="left:1429px;top:105px;width:15px;height:22px;background:#fff;border:1px solid #c6c6c6;box-sizing:border-box;"></div>
<div class="abs" style="left:1433px;top:113px;width:6px;height:1px;background:#777;"></div>
<svg style="left:1433.5px;top:116.05px" width="5" height="2.5" viewBox="0 0 5 2.5"><path d="M0 0H5L2.5 2.5Z" fill="#777"/></svg>
<span class="t" style="left:1145.5px;top:134.8px;height:18px;line-height:18px;font-size:12px;color:#666;transform:scaleX(0.7997);">スタイル</span>
<svg style="left:1464px;top:67px" width="27" height="28" viewBox="0 0 27 28"><path d="M0.5 0.5H14.5V5.5H0.5Z M7.5 0.5V5.5" fill="#fff" stroke="#8a8a8a"/><path d="M11.5 8.5H25.5V13.5H11.5Z M18.5 8.5V13.5" fill="#bdd7ee" stroke="#8a8a8a"/><path d="M8.2 11H1.6M4.4 8.3L1.4 11L4.4 13.7" fill="none" stroke="#3b79c3" stroke-width="1.6"/><path d="M0.5 16.5H14.5V26.5H0.5Z M7.5 16.5V26.5 M0.5 21.5H14.5" fill="#fff" stroke="#8a8a8a"/></svg>
<span class="t" style="left:1464.5px;top:98.8px;height:18px;line-height:18px;font-size:12px;color:#444;transform:scaleX(1.0243);">挿入</span>
<svg style="left:1475.9px;top:120.05px" width="5" height="2.5" viewBox="0 0 5 2.5"><path d="M0 0H5L2.5 2.5Z" fill="#777"/></svg>
<svg style="left:1505px;top:67px" width="30" height="28" viewBox="0 0 30 28"><path d="M0.5 0.5H14.5V5.5H0.5Z M7.5 0.5V5.5" fill="#fff" stroke="#8a8a8a"/><path d="M6.5 8.5H17.5V13.5H6.5Z M12.5 8.5V13.5" fill="#bdd7ee" stroke="#8a8a8a"/><path d="M0.5 17.5H14.5V27.5H0.5Z M7.5 17.5V27.5 M0.5 22.5H14.5" fill="#fff" stroke="#8a8a8a"/><path d="M15.5 6.8L28.5 18.6 M28.6 6.4L15 18.8" fill="none" stroke="#e05e3a" stroke-width="1.9"/></svg>
<span class="t" style="left:1506.8px;top:98.8px;height:18px;line-height:18px;font-size:12px;color:#444;transform:scaleX(1.0243);">削除</span>
<svg style="left:1517.9px;top:120.05px" width="5" height="2.5" viewBox="0 0 5 2.5"><path d="M0 0H5L2.5 2.5Z" fill="#777"/></svg>
<svg style="left:1547px;top:66px" width="28" height="31" viewBox="0 0 28 31"><path d="M0.5 0V5 M22.5 0V5 M2.5 2.5H20.5 M5 0.3L2.6 2.5L5 4.7 M18 0.3L20.4 2.5L18 4.7" fill="none" stroke="#3b79c3"/><rect x="0.5" y="6.5" width="27" height="20" fill="#fff" stroke="#8a8a8a"/><path d="M7.5 6.5V26.5 M15.5 6.5V26.5 M22.5 6.5V26.5 M0.5 11.5H27.5 M0.5 21.5H27.5" stroke="#b5b5b5" fill="none"/><rect x="8" y="12" width="7" height="9" fill="#4a86c8"/><path d="M0.5 26.5V30.5H7.5L9.5 27 M9.5 27L10.5 30.5H16L18.5 26.5" fill="none" stroke="#8a8a8a"/></svg>
<span class="t" style="left:1548.8px;top:98.8px;height:18px;line-height:18px;font-size:12px;color:#444;transform:scaleX(1.0243);">書式</span>
<svg style="left:1559.9px;top:120.05px" width="5" height="2.5" viewBox="0 0 5 2.5"><path d="M0 0H5L2.5 2.5Z" fill="#777"/></svg>
<span class="t" style="left:1508.7px;top:135px;height:18px;line-height:18px;font-size:12px;color:#666;transform:scaleX(0.8619);">セル</span>
<svg style="left:1594px;top:65px" width="15" height="15" viewBox="0 0 15 15"><path d="M14 3.2V1H1.2L8 7.6L1.2 14H14.2V11.6" fill="none" stroke="#444" stroke-width="1.9" stroke-linejoin="miter"/></svg>
<span class="t" style="left:1613px;top:66.5px;height:18px;line-height:18px;font-size:12px;color:#444;transform:scaleX(0.7691);">オート</span>
<span class="t" style="left:1644px;top:66.1px;height:18px;line-height:18px;font-size:12px;color:#444;">SUM</span>
<svg style="left:1681px;top:72.35px" width="5" height="2.5" viewBox="0 0 5 2.5"><path d="M0 0H5L2.5 2.5Z" fill="#777"/></svg>
<svg style="left:1595px;top:88px" width="14" height="16" viewBox="0 0 14 16"><rect x="0.5" y="0.5" width="13" height="15" fill="#fff" stroke="#7f7f7f"/><rect x="0" y="0" width="14" height="4" fill="#7f7f7f"/><path d="M7 6V13 M3.6 9.8L7 13.2L10.4 9.8" fill="none" stroke="#3b79c3" stroke-width="1.7"/></svg>
<span class="t" style="left:1613px;top:89.1px;height:18px;line-height:18px;font-size:12px;color:#444;transform:scaleX(0.7102);">フィル</span>
<svg style="left:1642.2px;top:94.95px" width="5" height="2.5" viewBox="0 0 5 2.5"><path d="M0 0H5L2.5 2.5Z" fill="#777"/></svg>
<svg style="left:1595px;top:112px" width="14" height="13" viewBox="0 0 14 13"><path d="M8.3 0.4L13 4.6L6 11.8L1.3 7.4Z" fill="#e8879c"/><path d="M1.3 7.4L0.4 9.2L4.2 12.6L6 11.8Z" fill="#e8a2b1"/><path d="M5 12.5H13.8" stroke="#666"/></svg>
<span class="t" style="left:1613px;top:111.9px;height:18px;line-height:18px;font-size:12px;color:#444;transform:scaleX(0.6775);">クリア</span>
<svg style="left:1641.1px;top:118.25px" width="5" height="2.5" viewBox="0 0 5 2.5"><path d="M0 0H5L2.5 2.5Z" fill="#777"/></svg>
<span class="t" style="left:1703.5px;top:62.1667px;height:24px;line-height:24px;font-size:16px;color:#3b79c3;transform:scaleX(1.1338);">A</span>
<span class="t" style="left:1704.5px;top:76.3667px;height:24px;line-height:24px;font-size:16px;color:#9b59b6;transform:scaleX(1.0633);">Z</span>
<svg style="left:1716px;top:75px" width="18" height="15" viewBox="0 0 18 15"><path d="M0.3 0.5H17.3L10.8 7.2H6.8Z" fill="#7f7f7f"/><path d="M7.3 7V13.8H10.3V7" fill="#fff" stroke="#7f7f7f"/></svg>
<span class="t" style="left:1694px;top:98.9px;height:18px;line-height:18px;font-size:12px;color:#444;transform:scaleX(0.8531);">並べ替えと</span>
<span class="t" style="left:1692.5px;top:113.8px;height:18px;line-height:18px;font-size:12px;color:#444;transform:scaleX(0.7228);">フィルター</span>
<svg style="left:1739.9px;top:120.25px" width="5" height="2.5" viewBox="0 0 5 2.5"><path d="M0 0H5L2.5 2.5Z" fill="#777"/></svg>
<svg style="left:1754px;top:66px" width="29" height="29" viewBox="0 0 29 29"><path d="M2.2 26.6L10.6 18.2" stroke="#3b79c3" stroke-width="3.4" stroke-linecap="round"/><circle cx="18.2" cy="10.8" r="8.8" fill="#fff" stroke="#3b79c3" stroke-width="2.2"/></svg>
<span class="t" style="left:1752.7px;top:98.9px;height:18px;line-height:18px;font-size:12px;color:#444;transform:scaleX(0.9079);">検索と</span>
<span class="t" style="left:1751.5px;top:113.8px;height:18px;line-height:18px;font-size:12px;color:#444;transform:scaleX(1.0285);">選択</span>
<svg style="left:1780.2px;top:120.25px" width="5" height="2.5" viewBox="0 0 5 2.5"><path d="M0 0H5L2.5 2.5Z" fill="#777"/></svg>
<span class="t" style="left:1677.7px;top:135px;height:18px;line-height:18px;font-size:12px;color:#666;transform:scaleX(1.0285);">編集</span>
<svg style="left:1902px;top:141px" width="10" height="6" viewBox="0 0 10 6"><path d="M0.8 5.2L5 1L9.2 5.2" fill="none" stroke="#555" stroke-width="1.9"/></svg>
<!-- formulabar -->
<div class="abs" style="left:0px;top:153px;width:1920px;height:51px;background:#e6e6e6;"></div>
<div class="abs" style="left:5px;top:163px;width:102px;height:31px;background:#fff;border:1px solid #c6c6c6;box-sizing:border-box;"></div>
<span class="t" style="left:12.5px;top:169.611px;height:22px;line-height:22px;font-size:14.67px;color:#444;transform:scaleX(0.9422);">A1</span>
<svg style="left:93.2px;top:176.45px" width="7" height="3.5" viewBox="0 0 7 3.5"><path d="M0 0H7L3.5 3.5Z" fill="#777"/></svg>
<div class="abs" style="left:121px;top:174px;width:2px;height:2px;background:#a6a6a6;"></div>
<div class="abs" style="left:121px;top:178px;width:2px;height:2px;background:#a6a6a6;"></div>
<div class="abs" style="left:121px;top:182px;width:2px;height:2px;background:#a6a6a6;"></div>
<div class="abs" style="left:137px;top:163px;width:110px;height:31px;background:#fff;border:1px solid #c6c6c6;box-sizing:border-box;"></div>
<svg style="left:151px;top:174px" width="10" height="10" viewBox="0 0 10 10"><path d="M0.5 0.5L9.5 9.5M9.5 0.5L0.5 9.5" stroke="#bdbdbd" stroke-width="1.4"/></svg>
<svg style="left:185px;top:173px" width="14" height="11" viewBox="0 0 14 11"><path d="M1 6L5 10L13 1" fill="none" stroke="#c8c8c8" stroke-width="1.9"/></svg>
<span class="t" style="left:222.3px;top:166.804px;height:22px;line-height:22px;font-size:14.5px;color:#555;font-style:italic;font-family:'Liberation Serif',serif;transform:scaleX(1.6620);">f</span>
<span class="t" style="left:227.9px;top:173.596px;height:14px;line-height:14px;font-size:9.5px;color:#555;font-style:italic;font-family:'Liberation Serif',serif;transform:scaleX(1.5407);">x</span>
<div class="abs" style="left:250px;top:163px;width:1666px;height:31px;background:#fff;border:1px solid #c6c6c6;box-sizing:border-box;"></div>
<span class="t" style="left:263.5px;top:166.911px;height:22px;line-height:22px;font-size:14.67px;color:#333;font-weight:300;transform:scaleX(1.0123);">商品コード</span>
<svg style="left:1903.6px;top:175.6px" width="8" height="6" viewBox="0 0 8 6"><path d="M0.9 0.9L4 4.2L7.1 0.9" fill="none" stroke="#555" stroke-width="2"/></svg>
<!-- grid -->
<div class="abs" style="left:0px;top:204px;width:1920px;height:24px;background:#e6e6e6;"></div>
<div class="abs" style="left:29px;top:229px;width:1870px;height:675px;background:#fff;"></div>
<div class="abs" style="left:28px;top:204px;width:88px;height:24px;background:#d2d2d2;"></div>
<div class="abs" style="left:0px;top:229px;width:28px;height:24px;background:#d2d2d2;"></div>
<svg style="left:8px;top:208px" width="17" height="17" viewBox="0 0 17 17"><path d="M17 0V17H0Z" fill="#b3b3b3"/></svg>
<div class="abs" style="left:116px;top:205px;width:1px;height:24px;background:#9f9f9f;"></div>
<div class="abs" style="left:218px;top:205px;width:1px;height:24px;background:#9f9f9f;"></div>
<div class="abs" style="left:504px;top:205px;width:1px;height:24px;background:#9f9f9f;"></div>
<div class="abs" style="left:781px;top:205px;width:1px;height:24px;background:#9f9f9f;"></div>
<div class="abs" style="left:1067px;top:205px;width:1px;height:24px;background:#9f9f9f;"></div>
<div class="abs" style="left:1345px;top:205px;width:1px;height:24px;background:#9f9f9f;"></div>
<div class="abs" style="left:1563px;top:205px;width:1px;height:24px;background:#9f9f9f;"></div>
<div class="abs" style="left:1781px;top:205px;width:1px;height:24px;background:#9f9f9f;"></div>
<div class="abs" style="left:0px;top:228px;width:28px;height:1px;background:#d0d0d0;"></div>
<div class="abs" style="left:28px;top:228px;width:1871px;height:1px;background:#9f9f9f;"></div>
<div class="abs" style="left:28px;top:229px;width:1px;height:675px;background:#9f9f9f;"></div>
<div class="abs" style="left:0px;top:253px;width:28px;height:1px;background:#c9c9c9;"></div>
<div class="abs" style="left:29px;top:253px;width:1870px;height:1px;background:#d4d4d4;"></div>
<div class="abs" style="left:0px;top:278px;width:28px;height:1px;background:#c9c9c9;"></div>
<div class="abs" style="left:29px;top:278px;width:1870px;height:1px;background:#d4d4d4;"></div>
<div class="abs" style="left:0px;top:303px;width:28px;height:1px;background:#c9c9c9;"></div>
<div class="abs" style="left:29px;top:303px;width:1870px;height:1px;background:#d4d4d4;"></div>
<div class="abs" style="left:0px;top:328px;width:28px;height:1px;background:#c9c9c9;"></div>
<div class="abs" style="left:29px;top:328px;width:1870px;height:1px;background:#d4d4d4;"></div>
<div class="abs" style="left:0px;top:353px;width:28px;height:1px;background:#c9c9c9;"></div>
<div class="abs" style="left:29px;top:353px;width:1870px;height:1px;background:#d4d4d4;"></div>
<div class="abs" style="left:0px;top:378px;width:28px;height:1px;background:#c9c9c9;"></div>
<div class="abs" style="left:29px;top:378px;width:1870px;height:1px;background:#d4d4d4;"></div>
<div class="abs" style="left:0px;top:403px;width:28px;height:1px;background:#c9c9c9;"></div>
<div class="abs" style="left:29px;top:403px;width:1870px;height:1px;background:#d4d4d4;"></div>
<div class="abs" style="left:0px;top:428px;width:28px;height:1px;background:#c9c9c9;"></div>
<div class="abs" style="left:29px;top:428px;width:1870px;height:1px;background:#d4d4d4;"></div>
<div class="abs" style="left:0px;top:453px;width:28px;height:1px;background:#c9c9c9;"></div>
<div class="abs" style="left:29px;top:453px;width:1870px;height:1px;background:#d4d4d4;"></div>
<div class="abs" style="left:0px;top:478px;width:28px;height:1px;background:#c9c9c9;"></div>
<div class="abs" style="left:29px;top:478px;width:1870px;height:1px;background:#d4d4d4;"></div>
<div class="abs" style="left:0px;top:503px;width:28px;height:1px;background:#c9c9c9;"></div>
<div class="abs" style="left:29px;top:503px;width:1870px;height:1px;background:#d4d4d4;"></div>
<div class="abs" style="left:0px;top:528px;width:28px;height:1px;background:#c9c9c9;"></div>
<div class="abs" style="left:29px;top:528px;width:1870px;height:1px;background:#d4d4d4;"></div>
<div class="abs" style="left:0px;top:554px;width:28px;height:1px;background:#c9c9c9;"></div>
<div class="abs" style="left:29px;top:554px;width:1870px;height:1px;background:#d4d4d4;"></div>
<div class="abs" style="left:0px;top:579px;width:28px;height:1px;background:#c9c9c9;"></div>
<div class="abs" style="left:29px;top:579px;width:1870px;height:1px;background:#d4d4d4;"></div>
<div class="abs" style="left:0px;top:604px;width:28px;height:1px;background:#c9c9c9;"></div>
<div class="abs" style="left:29px;top:604px;width:1870px;height:1px;background:#d4d4d4;"></div>
<div class="abs" style="left:0px;top:629px;width:28px;height:1px;background:#c9c9c9;"></div>
<div class="abs" style="left:29px;top:629px;width:1870px;height:1px;background:#d4d4d4;"></div>
<div class="abs" style="left:0px;top:654px;width:28px;height:1px;background:#c9c9c9;"></div>
<div class="abs" style="left:29px;top:654px;width:1870px;height:1px;background:#d4d4d4;"></div>
<div class="abs" style="left:0px;top:679px;width:28px;height:1px;background:#c9c9c9;"></div>
<div class="abs" style="left:29px;top:679px;width:1870px;height:1px;background:#d4d4d4;"></div>
<div class="abs" style="left:0px;top:704px;width:28px;height:1px;background:#c9c9c9;"></div>
<div class="abs" style="left:29px;top:704px;width:1870px;height:1px;background:#d4d4d4;"></div>
<div class="abs" style="left:0px;top:729px;width:28px;height:1px;background:#c9c9c9;"></div>
<div class="abs" style="left:29px;top:729px;width:1870px;height:1px;background:#d4d4d4;"></div>
<div class="abs" style="left:0px;top:754px;width:28px;height:1px;background:#c9c9c9;"></div>
<div class="abs" style="left:29px;top:754px;width:1870px;height:1px;background:#d4d4d4;"></div>
<div class="abs" style="left:0px;top:779px;width:28px;height:1px;background:#c9c9c9;"></div>
<div class="abs" style="left:29px;top:779px;width:1870px;height:1px;background:#d4d4d4;"></div>
<div class="abs" style="left:0px;top:804px;width:28px;height:1px;background:#c9c9c9;"></div>
<div class="abs" style="left:29px;top:804px;width:1870px;height:1px;background:#d4d4d4;"></div>
<div class="abs" style="left:0px;top:829px;width:28px;height:1px;background:#c9c9c9;"></div>
<div class="abs" style="left:29px;top:829px;width:1870px;height:1px;background:#d4d4d4;"></div>
<div class="abs" style="left:0px;top:854px;width:28px;height:1px;background:#c9c9c9;"></div>
<div class="abs" style="left:29px;top:854px;width:1870px;height:1px;background:#d4d4d4;"></div>
<div class="abs" style="left:0px;top:879px;width:28px;height:1px;background:#c9c9c9;"></div>
<div class="abs" style="left:29px;top:879px;width:1870px;height:1px;background:#d4d4d4;"></div>
<div class="abs" style="left:0px;top:904px;width:28px;height:1px;background:#c9c9c9;"></div>
<div class="abs" style="left:29px;top:904px;width:1870px;height:1px;background:#d4d4d4;"></div>
<div class="abs" style="left:116px;top:229px;width:1px;height:675px;background:#d4d4d4;"></div>
<div class="abs" style="left:218px;top:229px;width:1px;height:675px;background:#d4d4d4;"></div>
<div class="abs" style="left:504px;top:229px;width:1px;height:675px;background:#d4d4d4;"></div>
<div class="abs" style="left:781px;top:229px;width:1px;height:675px;background:#d4d4d4;"></div>
<div class="abs" style="left:1067px;top:229px;width:1px;height:675px;background:#d4d4d4;"></div>
<div class="abs" style="left:1345px;top:229px;width:1px;height:675px;background:#d4d4d4;"></div>
<div class="abs" style="left:1563px;top:229px;width:1px;height:675px;background:#d4d4d4;"></div>
<div class="abs" style="left:1781px;top:229px;width:1px;height:675px;background:#d4d4d4;"></div>
<div class="abs" style="left:1899px;top:229px;width:1px;height:675px;background:#9f9f9f;"></div>
<div class="abs ch" style="left:52.5px;width:40px;color:#217346"><span class="L">A</span></div>
<div class="abs ch" style="left:147.5px;width:40px;color:#333"><span class="L">B</span></div>
<div class="abs ch" style="left:341.5px;width:40px;color:#333"><span class="L">C</span></div>
<div class="abs ch" style="left:623px;width:40px;color:#333"><span class="L">D</span></div>
<div class="abs ch" style="left:904.5px;width:40px;color:#333"><span class="L">E</span></div>
<div class="abs ch" style="left:1186.5px;width:40px;color:#333"><span class="L">F</span></div>
<div class="abs ch" style="left:1434.5px;width:40px;color:#333"><span class="L">G</span></div>
<div class="abs ch" style="left:1652.5px;width:40px;color:#333"><span class="L">H</span></div>
<div class="abs ch" style="left:1858px;width:40px;color:#333"><span class="L">I</span></div>
<div class="abs rh" style="top:229px;color:#217346"><span class="L">1</span></div>
<div class="abs rh" style="top:254px;color:#333"><span class="L">2</span></div>
<div class="abs rh" style="top:279px;color:#333"><span class="L">3</span></div>
<div class="abs rh" style="top:304px;color:#333"><span class="L">4</span></div>
<div class="abs rh" style="top:329px;color:#333"><span class="L">5</span></div>
<div class="abs rh" style="top:354px;color:#333"><span class="L">6</span></div>
<div class="abs rh" style="top:379px;color:#333"><span class="L">7</span></div>
<div class="abs rh" style="top:404px;color:#333"><span class="L">8</span></div>
<div class="abs rh" style="top:429px;color:#333"><span class="L">9</span></div>
<div class="abs rh" style="top:454px;color:#333"><span class="L">10</span></div>
<div class="abs rh" style="top:479px;color:#333"><span class="L">11</span></div>
<div class="abs rh" style="top:504px;color:#333"><span class="L">12</span></div>
<div class="abs rh" style="top:529px;color:#333"><span class="L">13</span></div>
<div class="abs rh" style="top:555px;color:#333"><span class="L">14</span></div>
<div class="abs rh" style="top:580px;color:#333"><span class="L">15</span></div>
<div class="abs rh" style="top:605px;color:#333"><span class="L">16</span></div>
<div class="abs rh" style="top:630px;color:#333"><span class="L">17</span></div>
<div class="abs rh" style="top:655px;color:#333"><span class="L">18</span></div>
<div class="abs rh" style="top:680px;color:#333"><span class="L">19</span></div>
<div class="abs rh" style="top:705px;color:#333"><span class="L">20</span></div>
<div class="abs rh" style="top:730px;color:#333"><span class="L">21</span></div>
<div class="abs rh" style="top:755px;color:#333"><span class="L">22</span></div>
<div class="abs rh" style="top:780px;color:#333"><span class="L">23</span></div>
<div class="abs rh" style="top:805px;color:#333"><span class="L">24</span></div>
<div class="abs rh" style="top:830px;color:#333"><span class="L">25</span></div>
<div class="abs rh" style="top:855px;color:#333"><span class="L">26</span></div>
<div class="abs rh" style="top:880px;color:#333"><span class="L">27</span></div>
<div class="c" style="left:29px;top:229px;width:87px">商品コード</div>
<div class="c" style="left:117px;top:229px;width:101px">商品名</div>
<div class="c" style="left:219px;top:229px;width:285px">商品属性グループ名<span class="L">1</span></div>
<div class="c" style="left:505px;top:229px;width:276px">商品属性パターンコード<span class="L">1</span></div>
<div class="c" style="left:782px;top:229px;width:285px">商品属性グループ名<span class="L">2</span></div>
<div class="c" style="left:1068px;top:229px;width:277px">商品属性パターンコード<span class="L">2</span></div>
<div class="c" style="left:1346px;top:229px;width:217px">商品カテゴリ名<span class="L">1</span></div>
<div class="c" style="left:1564px;top:229px;width:217px">商品カテゴリ名<span class="L">2</span></div>
<div class="c" style="left:1782px;top:229px;width:117px">ポイント付与可否</div>
<div class="c l" style="left:29px;top:254px;width:87px"><span class="L">ITEM_CD</span></div>
<div class="c l" style="left:117px;top:254px;width:101px"><span class="L">ITEM_NAME</span></div>
<div class="c l" style="left:219px;top:254px;width:285px"><span class="L">ITEM_ATTRIBUTE_GROUP_NAME_1</span></div>
<div class="c l" style="left:505px;top:254px;width:276px"><span class="L">ITEM_ATTRIBUTE_PATTERN_CD_1</span></div>
<div class="c l" style="left:782px;top:254px;width:285px"><span class="L">ITEM_ATTRIBUTE_GROUP_NAME_2</span></div>
<div class="c l" style="left:1068px;top:254px;width:277px"><span class="L">ITEM_ATTRIBUTE_PATTERN_CD_2</span></div>
<div class="c l" style="left:1346px;top:254px;width:217px"><span class="L">ITEM_CATEGORY_NAME_1</span></div>
<div class="c l" style="left:1564px;top:254px;width:217px"><span class="L">ITEM_CATEGORY_NAME_2</span></div>
<div class="c l" style="left:1782px;top:254px;width:117px"><span class="L">POINT_GRANT_USE_FLG</span></div>
<div class="c n" style="left:29px;top:279px;width:87px"><span class="L">1100001</span></div>
<div class="c" style="left:117px;top:279px;width:101px">テスト商品<span class="L">1</span></div>
<div class="c" style="left:219px;top:279px;width:285px">カラー</div>
<div class="c" style="left:505px;top:279px;width:276px">-</div>
<div class="c" style="left:782px;top:279px;width:285px">サイズ</div>
<div class="c" style="left:1068px;top:279px;width:277px">-</div>
<div class="c" style="left:1346px;top:279px;width:217px">レディース</div>
<div class="c" style="left:1564px;top:279px;width:217px">トップス</div>
<div class="c" style="left:1782px;top:279px;width:117px">ポイント付与する</div>
<div class="c n" style="left:29px;top:304px;width:87px"><span class="L">1100002</span></div>
<div class="c" style="left:117px;top:304px;width:101px">テスト商品<span class="L">2</span></div>
<div class="c" style="left:219px;top:304px;width:285px">カラー</div>
<div class="c" style="left:505px;top:304px;width:276px">-</div>
<div class="c" style="left:782px;top:304px;width:285px">サイズ</div>
<div class="c" style="left:1068px;top:304px;width:277px">-</div>
<div class="c" style="left:1346px;top:304px;width:217px">レディース</div>
<div class="c" style="left:1564px;top:304px;width:217px">トップス</div>
<div class="c" style="left:1782px;top:304px;width:117px">ポイント付与する</div>
<div class="c n" style="left:29px;top:329px;width:87px"><span class="L">1100003</span></div>
<div class="c" style="left:117px;top:329px;width:101px">テスト商品<span class="L">3</span></div>
<div class="c" style="left:219px;top:329px;width:285px">カラー</div>
<div class="c" style="left:505px;top:329px;width:276px">-</div>
<div class="c" style="left:782px;top:329px;width:285px">サイズ</div>
<div class="c" style="left:1068px;top:329px;width:277px">-</div>
<div class="c" style="left:1346px;top:329px;width:217px">レディース</div>
<div class="c" style="left:1564px;top:329px;width:217px">トップス</div>
<div class="c" style="left:1782px;top:329px;width:117px">ポイント付与する</div>
<div class="c n" style="left:29px;top:354px;width:87px"><span class="L">1100004</span></div>
<div class="c" style="left:117px;top:354px;width:101px">テスト商品<span class="L">4</span></div>
<div class="c" style="left:219px;top:354px;width:285px">カラー</div>
<div class="c" style="left:505px;top:354px;width:276px">-</div>
<div class="c" style="left:782px;top:354px;width:285px">サイズ</div>
<div class="c" style="left:1068px;top:354px;width:277px">-</div>
<div class="c" style="left:1346px;top:354px;width:217px">レディース</div>
<div class="c" style="left:1564px;top:354px;width:217px">トップス</div>
<div class="c" style="left:1782px;top:354px;width:117px">ポイント付与する</div>
<div class="c n" style="left:29px;top:379px;width:87px"><span class="L">1100005</span></div>
<div class="c" style="left:117px;top:379px;width:101px">テスト商品<span class="L">5</span></div>
<div class="c" style="left:219px;top:379px;width:285px">カラー</div>
<div class="c" style="left:505px;top:379px;width:276px">-</div>
<div class="c" style="left:782px;top:379px;width:285px">サイズ</div>
<div class="c" style="left:1068px;top:379px;width:277px">-</div>
<div class="c" style="left:1346px;top:379px;width:217px">レディース</div>
<div class="c" style="left:1564px;top:379px;width:217px">トップス</div>
<div class="c" style="left:1782px;top:379px;width:117px">ポイント付与する</div>
<div class="c n" style="left:29px;top:404px;width:87px"><span class="L">1100006</span></div>
<div class="c" style="left:117px;top:404px;width:101px">テスト商品<span class="L">6</span></div>
<div class="c" style="left:219px;top:404px;width:285px">カラー</div>
<div class="c" style="left:505px;top:404px;width:276px">-</div>
<div class="c" style="left:782px;top:404px;width:285px">サイズ</div>
<div class="c" style="left:1068px;top:404px;width:277px">-</div>
<div class="c" style="left:1346px;top:404px;width:217px">レディース</div>
<div class="c" style="left:1564px;top:404px;width:217px">トップス</div>
<div class="c" style="left:1782px;top:404px;width:117px">ポイント付与する</div>
<div class="c n" style="left:29px;top:429px;width:87px"><span class="L">1100007</span></div>
<div class="c" style="left:117px;top:429px;width:101px">テスト商品<span class="L">7</span></div>
<div class="c" style="left:219px;top:429px;width:285px">カラー</div>
<div class="c" style="left:505px;top:429px;width:276px">-</div>
<div class="c" style="left:782px;top:429px;width:285px">サイズ</div>
<div class="c" style="left:1068px;top:429px;width:277px">-</div>
<div class="c" style="left:1346px;top:429px;width:217px">レディース</div>
<div class="c" style="left:1564px;top:429px;width:217px">トップス</div>
<div class="c" style="left:1782px;top:429px;width:117px">ポイント付与する</div>
<div class="c n" style="left:29px;top:454px;width:87px"><span class="L">1100008</span></div>
<div class="c" style="left:117px;top:454px;width:101px">テスト商品<span class="L">8</span></div>
<div class="c" style="left:219px;top:454px;width:285px">カラー</div>
<div class="c" style="left:505px;top:454px;width:276px">-</div>
<div class="c" style="left:782px;top:454px;width:285px">サイズ</div>
<div class="c" style="left:1068px;top:454px;width:277px">-</div>
<div class="c" style="left:1346px;top:454px;width:217px">レディース</div>
<div class="c" style="left:1564px;top:454px;width:217px">トップス</div>
<div class="c" style="left:1782px;top:454px;width:117px">ポイント付与する</div>
<div class="c n" style="left:29px;top:479px;width:87px"><span class="L">1100009</span></div>
<div class="c" style="left:117px;top:479px;width:101px">テスト商品<span class="L">9</span></div>
<div class="c" style="left:219px;top:479px;width:285px">カラー</div>
<div class="c" style="left:505px;top:479px;width:276px">-</div>
<div class="c" style="left:782px;top:479px;width:285px">サイズ</div>
<div class="c" style="left:1068px;top:479px;width:277px">-</div>
<div class="c" style="left:1346px;top:479px;width:217px">レディース</div>
<div class="c" style="left:1564px;top:479px;width:217px">トップス</div>
<div class="c" style="left:1782px;top:479px;width:117px">ポイント付与する</div>
<div class="c n" style="left:29px;top:504px;width:87px"><span class="L">1100010</span></div>
<div class="c" style="left:117px;top:504px;width:101px">テスト商品<span class="L">10</span></div>
<div class="c" style="left:219px;top:504px;width:285px">カラー</div>
<div class="c" style="left:505px;top:504px;width:276px">-</div>
<div class="c" style="left:782px;top:504px;width:285px">サイズ</div>
<div class="c" style="left:1068px;top:504px;width:277px">-</div>
<div class="c" style="left:1346px;top:504px;width:217px">レディース</div>
<div class="c" style="left:1564px;top:504px;width:217px">トップス</div>
<div class="c" style="left:1782px;top:504px;width:117px">ポイント付与する</div>
<div class="c n" style="left:29px;top:529px;width:87px"><span class="L">1100011</span></div>
<div class="c" style="left:117px;top:529px;width:101px">テスト商品<span class="L">11</span></div>
<div class="c" style="left:219px;top:529px;width:285px">カラー</div>
<div class="c" style="left:505px;top:529px;width:276px">-</div>
<div class="c" style="left:782px;top:529px;width:285px">サイズ</div>
<div class="c" style="left:1068px;top:529px;width:277px">-</div>
<div class="c" style="left:1346px;top:529px;width:217px">レディース</div>
<div class="c" style="left:1564px;top:529px;width:217px">ボトムス</div>
<div class="c" style="left:1782px;top:529px;width:117px">ポイント付与する</div>
<div class="c n" style="left:29px;top:555px;width:87px"><span class="L">1100012</span></div>
<div class="c" style="left:117px;top:555px;width:101px">テスト商品<span class="L">12</span></div>
<div class="c" style="left:219px;top:555px;width:285px">カラー</div>
<div class="c" style="left:505px;top:555px;width:276px">-</div>
<div class="c" style="left:782px;top:555px;width:285px">サイズ</div>
<div class="c" style="left:1068px;top:555px;width:277px">-</div>
<div class="c" style="left:1346px;top:555px;width:217px">レディース</div>
<div class="c" style="left:1564px;top:555px;width:217px">ボトムス</div>
<div class="c" style="left:1782px;top:555px;width:117px">ポイント付与する</div>
<div class="c n" style="left:29px;top:580px;width:87px"><span class="L">1100013</span></div>
<div class="c" style="left:117px;top:580px;width:101px">テスト商品<span class="L">13</span></div>
<div class="c" style="left:219px;top:580px;width:285px">カラー</div>
<div class="c" style="left:505px;top:580px;width:276px">-</div>
<div class="c" style="left:782px;top:580px;width:285px">サイズ</div>
<div class="c" style="left:1068px;top:580px;width:277px">-</div>
<div class="c" style="left:1346px;top:580px;width:217px">レディース</div>
<div class="c" style="left:1564px;top:580px;width:217px">ボトムス</div>
<div class="c" style="left:1782px;top:580px;width:117px">ポイント付与する</div>
<div class="c n" style="left:29px;top:605px;width:87px"><span class="L">1100014</span></div>
<div class="c" style="left:117px;top:605px;width:101px">テスト商品<span class="L">14</span></div>
<div class="c" style="left:219px;top:605px;width:285px">カラー</div>
<div class="c" style="left:505px;top:605px;width:276px">-</div>
<div class="c" style="left:782px;top:605px;width:285px">サイズ</div>
<div class="c" style="left:1068px;top:605px;width:277px">-</div>
<div class="c" style="left:1346px;top:605px;width:217px">レディース</div>
<div class="c" style="left:1564px;top:605px;width:217px">ボトムス</div>
<div class="c" style="left:1782px;top:605px;width:117px">ポイント付与する</div>
<div class="c n" style="left:29px;top:630px;width:87px"><span class="L">1100015</span></div>
<div class="c" style="left:117px;top:630px;width:101px">テスト商品<span class="L">15</span></div>
<div class="c" style="left:219px;top:630px;width:285px">カラー</div>
<div class="c" style="left:505px;top:630px;width:276px">-</div>
<div class="c" style="left:782px;top:630px;width:285px">サイズ</div>
<div class="c" style="left:1068px;top:630px;width:277px">-</div>
<div class="c" style="left:1346px;top:630px;width:217px">レディース</div>
<div class="c" style="left:1564px;top:630px;width:217px">ボトムス</div>
<div class="c" style="left:1782px;top:630px;width:117px">ポイント付与する</div>
<div class="c n" style="left:29px;top:655px;width:87px"><span class="L">1100016</span></div>
<div class="c" style="left:117px;top:655px;width:101px">テスト商品<span class="L">16</span></div>
<div class="c" style="left:219px;top:655px;width:285px">カラー</div>
<div class="c" style="left:505px;top:655px;width:276px">-</div>
<div class="c" style="left:782px;top:655px;width:285px">サイズ</div>
<div class="c" style="left:1068px;top:655px;width:277px">-</div>
<div class="c" style="left:1346px;top:655px;width:217px">レディース</div>
<div class="c" style="left:1564px;top:655px;width:217px">ボトムス</div>
<div class="c" style="left:1782px;top:655px;width:117px">ポイント付与する</div>
<div class="c n" style="left:29px;top:680px;width:87px"><span class="L">1100017</span></div>
<div class="c" style="left:117px;top:680px;width:101px">テスト商品<span class="L">17</span></div>
<div class="c" style="left:219px;top:680px;width:285px">カラー</div>
<div class="c" style="left:505px;top:680px;width:276px">-</div>
<div class="c" style="left:782px;top:680px;width:285px">サイズ</div>
<div class="c" style="left:1068px;top:680px;width:277px">-</div>
<div class="c" style="left:1346px;top:680px;width:217px">レディース</div>
<div class="c" style="left:1564px;top:680px;width:217px">ボトムス</div>
<div class="c" style="left:1782px;top:680px;width:117px">ポイント付与する</div>
<div class="c n" style="left:29px;top:705px;width:87px"><span class="L">1100018</span></div>
<div class="c" style="left:117px;top:705px;width:101px">テスト商品<span class="L">18</span></div>
<div class="c" style="left:219px;top:705px;width:285px">カラー</div>
<div class="c" style="left:505px;top:705px;width:276px">-</div>
<div class="c" style="left:782px;top:705px;width:285px">サイズ</div>
<div class="c" style="left:1068px;top:705px;width:277px">-</div>
<div class="c" style="left:1346px;top:705px;width:217px">レディース</div>
<div class="c" style="left:1564px;top:705px;width:217px">ボトムス</div>
<div class="c" style="left:1782px;top:705px;width:117px">ポイント付与する</div>
<div class="c n" style="left:29px;top:730px;width:87px"><span class="L">1100019</span></div>
<div class="c" style="left:117px;top:730px;width:101px">テスト商品<span class="L">19</span></div>
<div class="c" style="left:219px;top:730px;width:285px">カラー</div>
<div class="c" style="left:505px;top:730px;width:276px">-</div>
<div class="c" style="left:782px;top:730px;width:285px">サイズ</div>
<div class="c" style="left:1068px;top:730px;width:277px">-</div>
<div class="c" style="left:1346px;top:730px;width:217px">レディース</div>
<div class="c" style="left:1564px;top:730px;width:217px">ボトムス</div>
<div class="c" style="left:1782px;top:730px;width:117px">ポイント付与する</div>
<div class="c n" style="left:29px;top:755px;width:87px"><span class="L">1100020</span></div>
<div class="c" style="left:117px;top:755px;width:101px">テスト商品<span class="L">20</span></div>
<div class="c" style="left:219px;top:755px;width:285px">カラー</div>
<div class="c" style="left:505px;top:755px;width:276px">-</div>
<div class="c" style="left:782px;top:755px;width:285px">サイズ</div>
<div class="c" style="left:1068px;top:755px;width:277px">-</div>
<div class="c" style="left:1346px;top:755px;width:217px">レディース</div>
<div class="c" style="left:1564px;top:755px;width:217px">ボトムス</div>
<div class="c" style="left:1782px;top:755px;width:117px">ポイント付与する</div>
<div class="c n" style="left:29px;top:780px;width:87px"><span class="L">1100021</span></div>
<div class="c" style="left:117px;top:780px;width:101px">テスト商品<span class="L">21</span></div>
<div class="c" style="left:219px;top:780px;width:285px">カラー</div>
<div class="c" style="left:505px;top:780px;width:276px">-</div>
<div class="c" style="left:782px;top:780px;width:285px">サイズ</div>
<div class="c" style="left:1068px;top:780px;width:277px">-</div>
<div class="c" style="left:1346px;top:780px;width:217px">メンズ</div>
<div class="c" style="left:1564px;top:780px;width:217px">トップス</div>
<div class="c" style="left:1782px;top:780px;width:117px">ポイント付与する</div>
<div class="c n" style="left:29px;top:805px;width:87px"><span class="L">1100022</span></div>
<div class="c" style="left:117px;top:805px;width:101px">テスト商品<span class="L">22</span></div>
<div class="c" style="left:219px;top:805px;width:285px">カラー</div>
<div class="c" style="left:505px;top:805px;width:276px">-</div>
<div class="c" style="left:782px;top:805px;width:285px">サイズ</div>
<div class="c" style="left:1068px;top:805px;width:277px">-</div>
<div class="c" style="left:1346px;top:805px;width:217px">メンズ</div>
<div class="c" style="left:1564px;top:805px;width:217px">トップス</div>
<div class="c" style="left:1782px;top:805px;width:117px">ポイント付与する</div>
<div class="c n" style="left:29px;top:830px;width:87px"><span class="L">1100023</span></div>
<div class="c" style="left:117px;top:830px;width:101px">テスト商品<span class="L">23</span></div>
<div class="c" style="left:219px;top:830px;width:285px">カラー</div>
<div class="c" style="left:505px;top:830px;width:276px">-</div>
<div class="c" style="left:782px;top:830px;width:285px">サイズ</div>
<div class="c" style="left:1068px;top:830px;width:277px">-</div>
<div class="c" style="left:1346px;top:830px;width:217px">メンズ</div>
<div class="c" style="left:1564px;top:830px;width:217px">トップス</div>
<div class="c" style="left:1782px;top:830px;width:117px">ポイント付与する</div>
<div class="c n" style="left:29px;top:855px;width:87px"><span class="L">1100024</span></div>
<div class="c" style="left:117px;top:855px;width:101px">テスト商品<span class="L">24</span></div>
<div class="c" style="left:219px;top:855px;width:285px">カラー</div>
<div class="c" style="left:505px;top:855px;width:276px">-</div>
<div class="c" style="left:782px;top:855px;width:285px">サイズ</div>
<div class="c" style="left:1068px;top:855px;width:277px">-</div>
<div class="c" style="left:1346px;top:855px;width:217px">メンズ</div>
<div class="c" style="left:1564px;top:855px;width:217px">トップス</div>
<div class="c" style="left:1782px;top:855px;width:117px">ポイント付与する</div>
<div class="c n" style="left:29px;top:880px;width:87px"><span class="L">1100025</span></div>
<div class="c" style="left:117px;top:880px;width:101px">テスト商品<span class="L">25</span></div>
<div class="c" style="left:219px;top:880px;width:285px">カラー</div>
<div class="c" style="left:505px;top:880px;width:276px">-</div>
<div class="c" style="left:782px;top:880px;width:285px">サイズ</div>
<div class="c" style="left:1068px;top:880px;width:277px">-</div>
<div class="c" style="left:1346px;top:880px;width:217px">メンズ</div>
<div class="c" style="left:1564px;top:880px;width:217px">トップス</div>
<div class="c" style="left:1782px;top:880px;width:117px">ポイント付与する</div>
<div class="abs" style="left:27px;top:227px;width:91px;height:28px;border:2px solid #217346;box-sizing:border-box;"></div>
<div class="abs" style="left:113px;top:250px;width:7px;height:7px;background:#fff;"></div>
<div class="abs" style="left:114px;top:251px;width:5px;height:5px;background:#217346;"></div>
<!-- bottom -->
<div class="abs" style="left:1900px;top:204px;width:20px;height:726px;background:#e6e6e6;"></div>
<div class="abs" style="left:1903px;top:206px;width:15px;height:697px;background:#d6d6d6;"></div>
<div class="abs" style="left:1903px;top:206px;width:15px;height:15px;background:#fff;border:1px solid #c6c6c6;box-sizing:border-box;"></div>
<svg style="left:1907px;top:211.5px" width="7" height="4" viewBox="0 0 7 4"><path d="M0 4H7L3.5 0Z" fill="#777"/></svg>
<div class="abs" style="left:1903px;top:220px;width:15px;height:170px;background:#fff;border:1px solid #c6c6c6;box-sizing:border-box;"></div>
<div class="abs" style="left:1903px;top:888px;width:15px;height:15px;background:#fff;border:1px solid #c6c6c6;box-sizing:border-box;"></div>
<svg style="left:1907px;top:894px" width="7" height="4" viewBox="0 0 7 4"><path d="M0 0H7L3.5 4Z" fill="#777"/></svg>
<div class="abs" style="left:0px;top:902px;width:1920px;height:28px;background:#e6e6e6;"></div>
<div class="abs" style="left:0px;top:902px;width:1900px;height:1px;background:#a6a6a6;"></div>
<svg style="left:26px;top:912px" width="6" height="8" viewBox="0 0 6 8"><path d="M5.5 0.3V7.7L0.5 4Z" fill="#c4c4c4"/></svg>
<svg style="left:55px;top:912px" width="6" height="8" viewBox="0 0 6 8"><path d="M0.5 0.3V7.7L5.5 4Z" fill="#c4c4c4"/></svg>
<div class="abs" style="left:100px;top:902px;width:234px;height:25px;background:#fff;border-left:1px solid #ababab;border-right:1px solid #ababab;box-sizing:border-box;"></div>
<div class="abs" style="left:100px;top:925px;width:234px;height:2px;background:#217346;"></div>
<span class="t" style="left:120.3px;top:905.758px;height:20px;line-height:20px;font-size:13.4px;color:#217346;transform:scaleX(1.0770);">itemUploadFormatItem_</span>
<span class="t" style="left:275.1px;top:907.133px;height:19px;line-height:19px;font-size:12.8px;color:#217346;transform:scaleX(0.9560);">目的４</span>
<svg style="left:366px;top:907px" width="18" height="18" viewBox="0 0 18 18"><circle cx="9" cy="9" r="7.6" fill="none" stroke="#777" stroke-width="1.2"/><path d="M9 5V13M5 9H13" stroke="#666" stroke-width="1.7"/></svg>
<div class="abs" style="left:1152px;top:910px;width:2px;height:2px;background:#a6a6a6;"></div>
<div class="abs" style="left:1152px;top:914px;width:2px;height:2px;background:#a6a6a6;"></div>
<div class="abs" style="left:1152px;top:918px;width:2px;height:2px;background:#a6a6a6;"></div>
<div class="abs" style="left:1170px;top:909px;width:730px;height:15px;background:#dadada;"></div>
<div class="abs" style="left:1170px;top:909px;width:15px;height:15px;background:#fff;border:1px solid #c6c6c6;box-sizing:border-box;"></div>
<svg style="left:1175px;top:913px" width="4" height="7" viewBox="0 0 4 7"><path d="M4 0V7L0 3.5Z" fill="#777"/></svg>
<div class="abs" style="left:1184px;top:909px;width:414px;height:15px;background:#fff;border:1px solid #c6c6c6;box-sizing:border-box;"></div>
<div class="abs" style="left:1885px;top:909px;width:15px;height:15px;background:#fff;border:1px solid #c6c6c6;box-sizing:border-box;"></div>
<svg style="left:1890.5px;top:913px" width="4" height="7" viewBox="0 0 4 7"><path d="M0 0V7L4 3.5Z" fill="#777"/></svg>
<div class="abs" style="left:0px;top:930px;width:1920px;height:1px;background:#c6c6c6;"></div>
<div class="abs" style="left:0px;top:931px;width:1920px;height:21px;background:#f1f1f1;"></div>
<span class="t" style="left:7px;top:933.2px;height:18px;line-height:18px;font-size:12px;color:#444;transform:scaleX(1.0080);">準備完了</span>
<div class="abs" style="left:1623px;top:931px;width:38px;height:21px;background:#c6c6c6;"></div>
<svg style="left:1635px;top:934px" width="13" height="13" viewBox="0 0 13 13"><path d="M0.5 0.5H12.5V12.5H0.5Z M4.5 0.5V12.5 M8.5 0.5V12.5 M0.5 4.5H12.5 M0.5 8.5H12.5" fill="none" stroke="#666"/></svg>
<svg style="left:1673px;top:934px" width="14" height="13" viewBox="0 0 14 13"><path d="M0.5 0.5H13.5V12.5H0.5Z" fill="none" stroke="#666"/><path d="M3.5 3.5H10.5V10H3.5Z M5 5.5H9 M5 7.5H9" fill="none" stroke="#666"/></svg>
<svg style="left:1711px;top:934px" width="14" height="13" viewBox="0 0 14 13"><path d="M0.5 0.5H13.5V12.5H0.5Z M4.5 0.5V6.5 M8.5 0.5V6.5 M0.5 6.5H8.5" fill="none" stroke="#666"/></svg>
<div class="abs" style="left:1742px;top:940px;width:6px;height:2px;background:#666;"></div>
<div class="abs" style="left:1752px;top:940px;width:100px;height:1px;background:#9a9a9a;"></div>
<div class="abs" style="left:1800px;top:935px;width:4px;height:11px;background:#666;"></div>
<div class="abs" style="left:1856px;top:940px;width:8px;height:2px;background:#666;"></div>
<div class="abs" style="left:1859px;top:937px;width:2px;height:8px;background:#666;"></div>
<span class="t" style="left:1880.5px;top:931.9px;height:18px;line-height:18px;font-size:12px;color:#555;transform:scaleX(1.0390);">100%</span>
</div>
</body></html>
